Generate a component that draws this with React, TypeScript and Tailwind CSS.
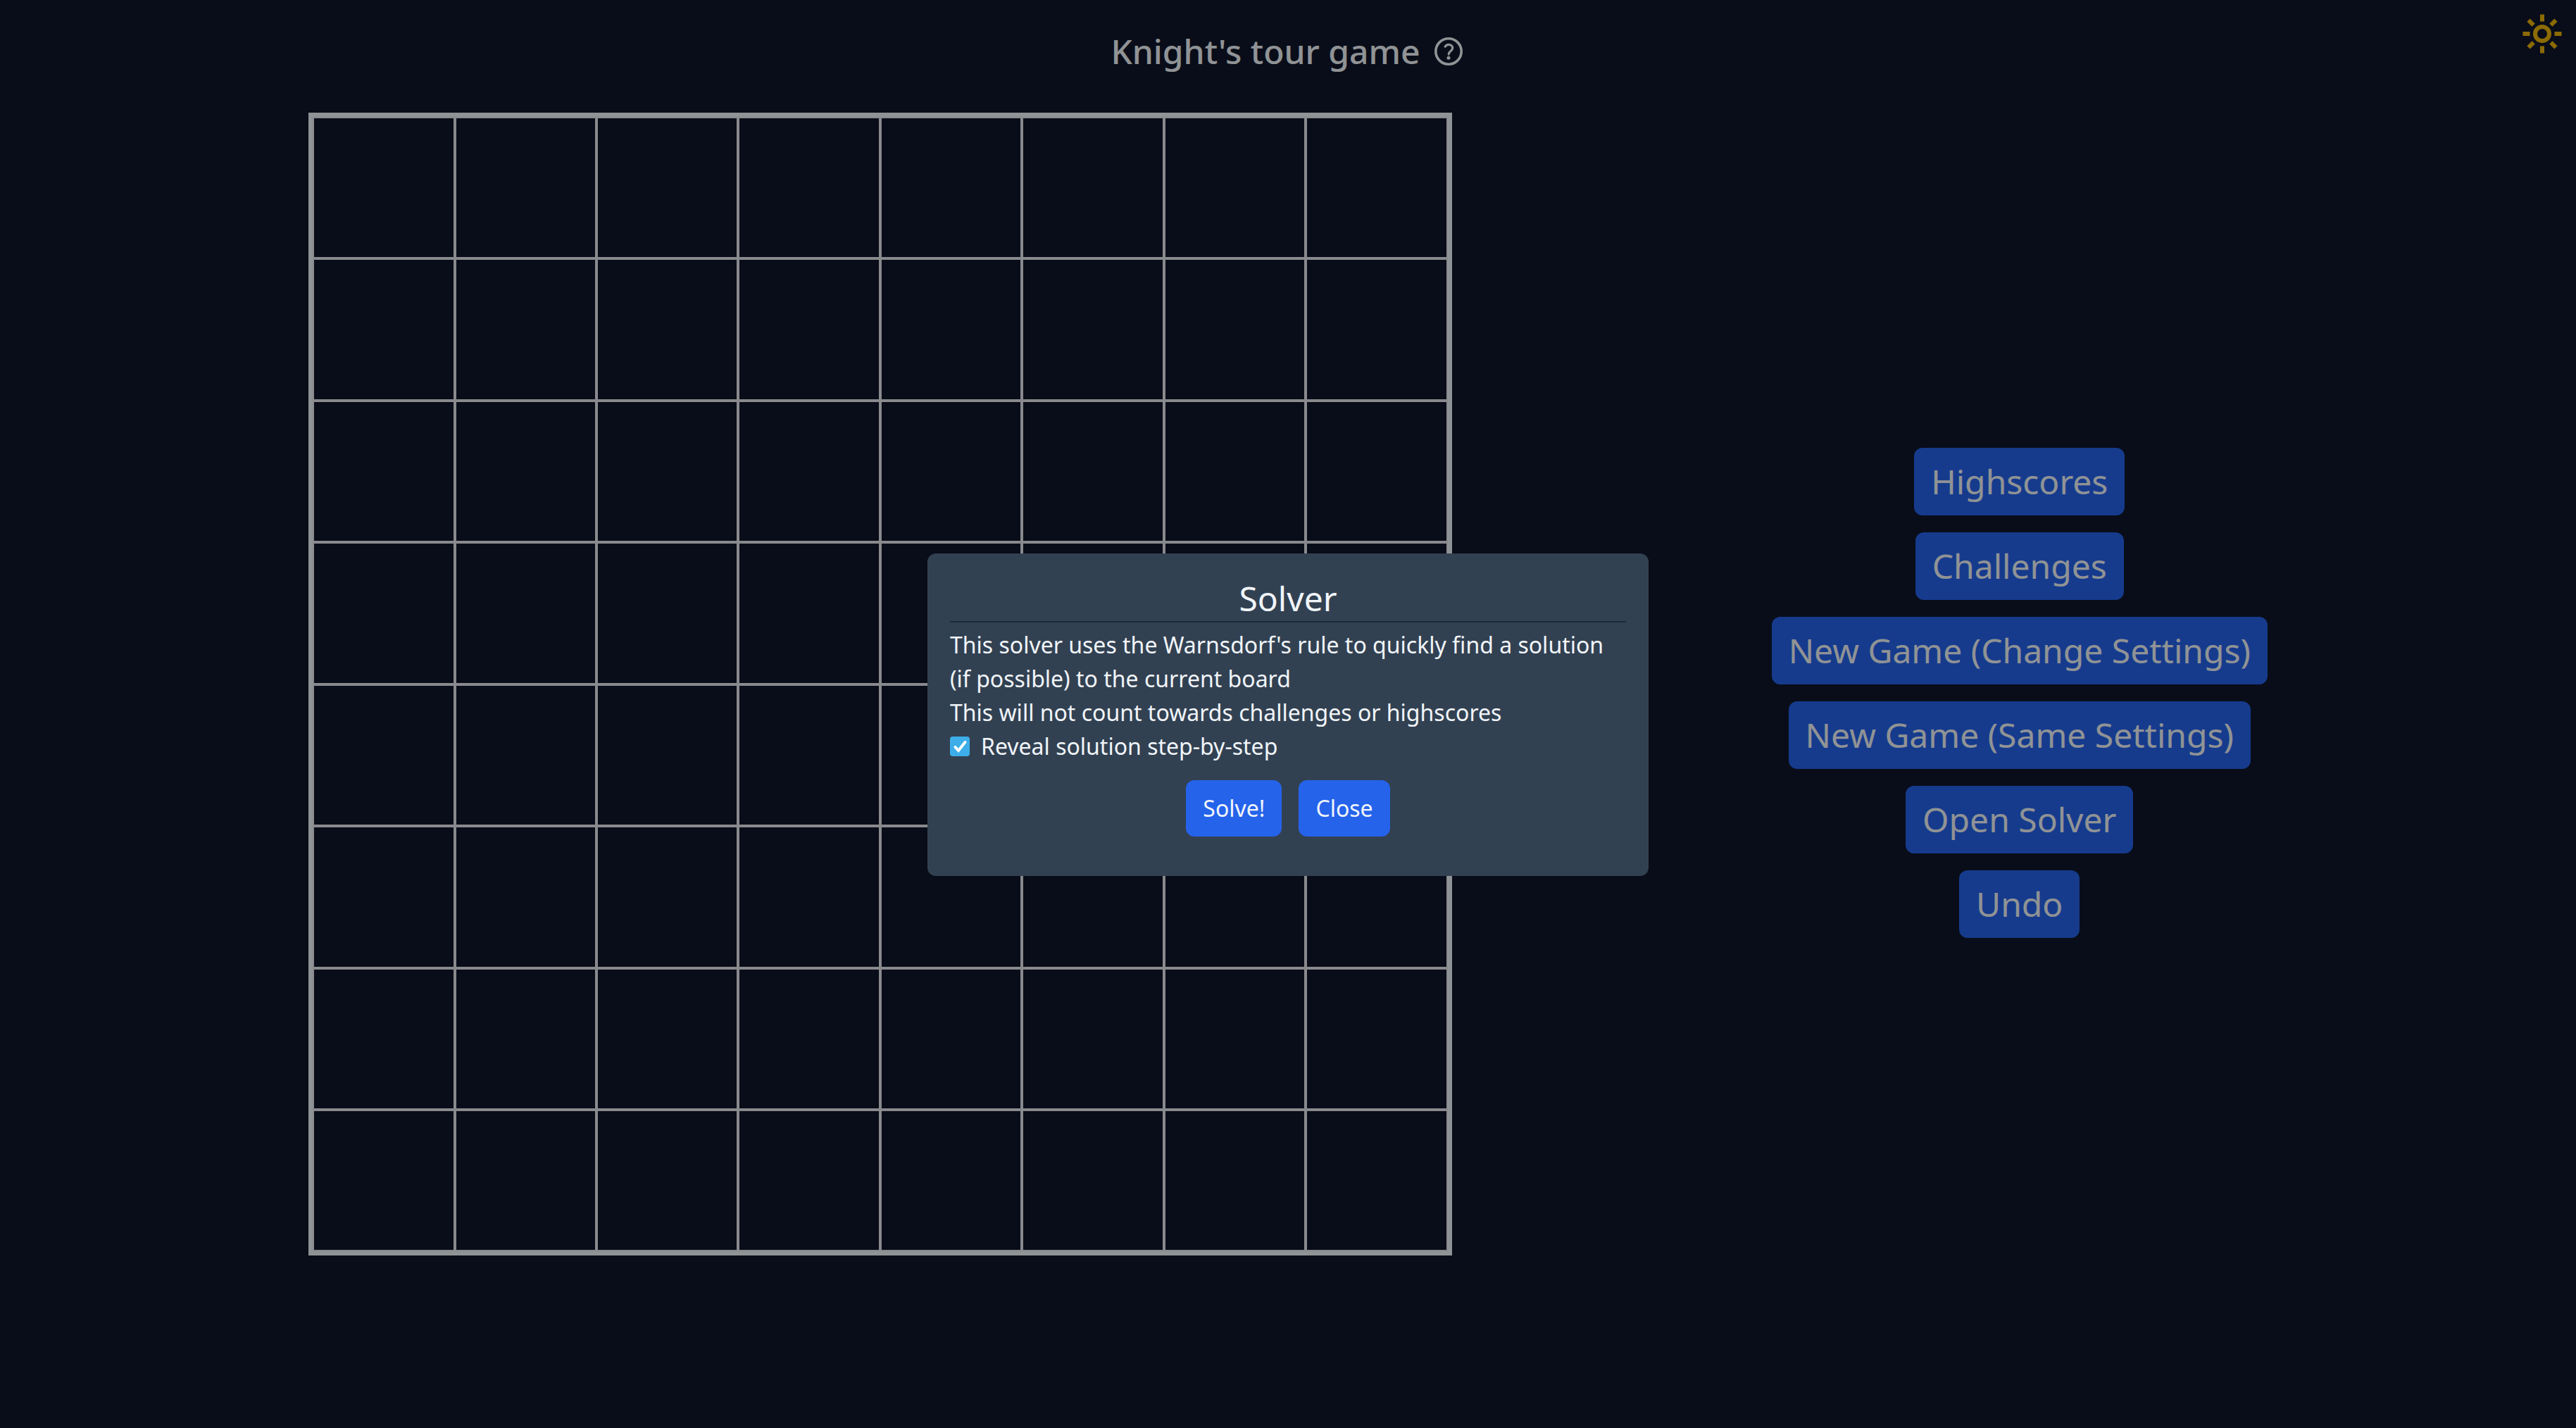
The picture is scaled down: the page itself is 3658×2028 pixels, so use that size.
const sidebar = [
  "Highscores",
  "Challenges",
  "New Game (Change Settings)",
  "New Game (Same Settings)",
  "Open Solver",
  "Undo",
];

const rays = [0, 45, 90, 135, 180, 225, 270, 315];

function SunIcon() {
  return (
    <svg viewBox="0 0 64 64" className="size-16" fill="none" stroke="currentColor" strokeWidth="6">
      <circle cx="32" cy="32" r="10" />
      {rays.map((angle) => (
        <path key={angle} d="M32 4.5v10" transform={`rotate(${angle} 32 32)`} />
      ))}
    </svg>
  );
}

function HelpIcon() {
  return (
    <svg viewBox="0 0 48 48" className="size-12" fill="none" stroke="currentColor">
      <circle cx="24" cy="24" r="18.2" strokeWidth="3.6" />
      <path
        d="M19.200 17.200c1-2 2.800-2.900 4.900-2.900 3.100 0 5.600 1.900 5.600 5 0 4.300-5.500 4.200-5.500 8.800"
        strokeWidth="3.200"
        strokeLinecap="round"
      />
      <circle cx="24" cy="33.200" r="2.500" fill="currentColor" stroke="none" />
    </svg>
  );
}

function CheckBox({ id }: { id: string }) {
  return (
    <span className="relative grid size-7">
      <input
        id={id}
        type="checkbox"
        defaultChecked
        className="peer size-7 appearance-none rounded-sm bg-slate-500 checked:bg-[#3daee9]"
      />
      <svg
        viewBox="0 0 28 28"
        className="pointer-events-none absolute inset-0 hidden size-7 peer-checked:block"
        fill="none"
        stroke="white"
        strokeWidth="4"
        strokeLinecap="round"
      >
        <path d="M7.500 15l4.500 5 9.500-12" />
      </svg>
    </span>
  );
}

function Board() {
  return (
    <div className="grid aspect-square h-[calc(80vh+1px)] grid-cols-8 grid-rows-8 border-6 border-[#f1f5f9]">
      {Array.from({ length: 64 }, (_, i) => (
        <div key={i} className="border-2 border-[#e5e7eb]" />
      ))}
    </div>
  );
}

function SolverDialog() {
  return (
    <div
      role="dialog"
      aria-modal="true"
      aria-labelledby="solver-title"
      className="w-full max-w-5xl rounded-xl bg-[#324152] p-8 text-[32px]/12 text-[#f1f5f9]"
    >
      <h2 id="solver-title" className="mb-2 border-b-2 border-[#1e293b] text-center text-5xl/16">
        Solver
      </h2>
      <p>This solver uses the Warnsdorf's rule to quickly find a solution (if possible) to the current board</p>
      <p>This will not count towards challenges or highscores</p>
      <div className="flex items-center gap-4">
        <CheckBox id="step" />
        <label htmlFor="step">Reveal solution step-by-step</label>
      </div>
      <div className="my-6 flex justify-center gap-6">
        <button type="button" className="rounded-xl bg-[#2563eb] px-6 py-4">Solve!</button>
        <button type="button" className="rounded-xl bg-[#2563eb] px-6 py-4">Close</button>
      </div>
    </div>
  );
}

export default function App() {
  return (
    <div className="relative min-h-screen bg-[#0f172a] font-['Noto_Sans',sans-serif] text-[#f1f5f9]">
      <button type="button" aria-label="Toggle theme" className="absolute top-4 right-4 text-[#eab308]">
        <SunIcon />
      </button>
      <header className="flex items-center justify-center gap-4 pt-[41px] pb-[55px]">
        <h1 className="text-5xl/16 font-medium">Knight's tour game</h1>
        <button type="button" aria-label="Help">
          <HelpIcon />
        </button>
      </header>
      <main className="flex items-center justify-evenly gap-4">
        <Board />
        <nav className="flex flex-col items-center gap-6 pt-6">
          {sidebar.map((label) => (
            <button key={label} type="button" className="rounded-xl bg-[#2563eb] px-6 py-4 text-5xl/16">
              {label}
            </button>
          ))}
        </nav>
      </main>
      <div className="fixed inset-0 flex items-center justify-center bg-black/40 pt-0.5">
        <SolverDialog />
      </div>
    </div>
  );
}
